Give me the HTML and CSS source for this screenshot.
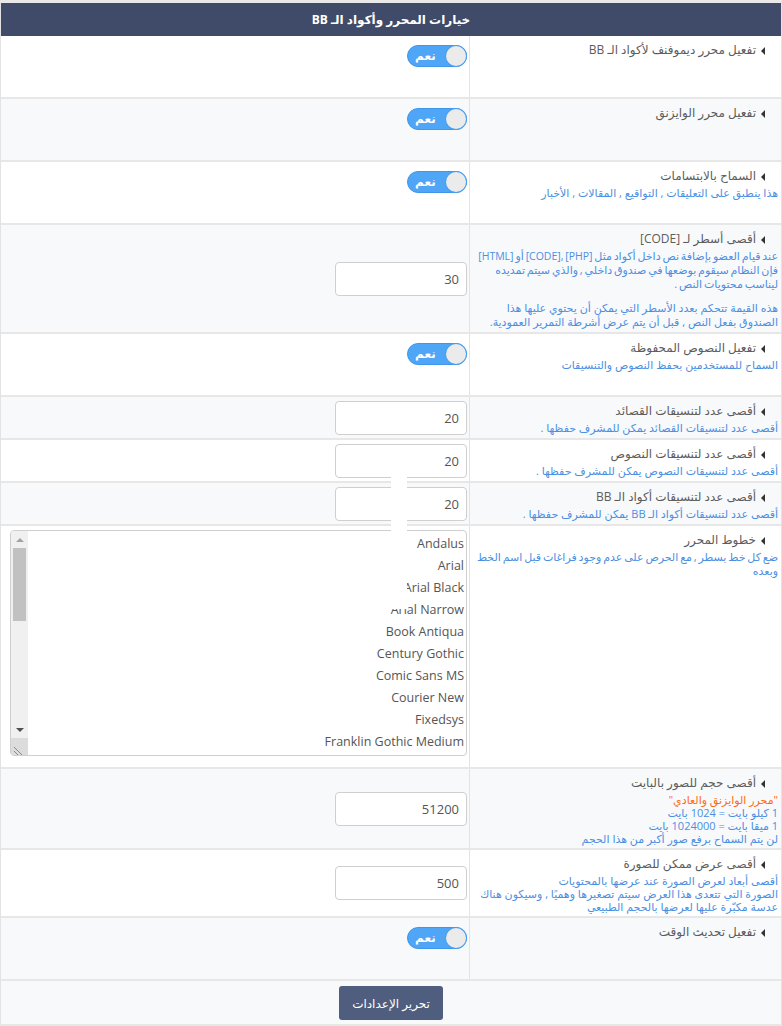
FILE: index.html
```
<html>
<head>
    <title>خيارات المحرر</title>
    <link rel="stylesheet" href="styles.css">
</head>
<body>
    <div class="panel" dir="rtl">
        <div class="panel-head">خيارات المحرر وأكواد الـ BB</div>

        <!-- Editor toggles -->
        <div class="row tall">
            <div class="label">
                <div class="title"><span class="arrow"></span>تفعيل محرر ديموفنف لأكواد الـ BB</div>
            </div>
            <div class="field top">
                <span class="switch"><span class="knob"></span><span class="switch-text">نعم</span></span>
            </div>
        </div>

        <div class="row tall alt">
            <div class="label">
                <div class="title"><span class="arrow"></span>تفعيل محرر الوايزنق</div>
            </div>
            <div class="field top">
                <span class="switch"><span class="knob"></span><span class="switch-text">نعم</span></span>
            </div>
        </div>

        <div class="row tall">
            <div class="label">
                <div class="title"><span class="arrow"></span>السماح بالابتسامات</div>
                <div class="desc">هذا ينطبق على التعليقات , التواقيع , المقالات , الأخبار</div>
            </div>
            <div class="field top">
                <span class="switch"><span class="knob"></span><span class="switch-text">نعم</span></span>
            </div>
        </div>

        <div class="row alt">
            <div class="label">
                <div class="title"><span class="arrow"></span>أقصى أسطر لـ [CODE]</div>
                <div class="desc lines squeeze">عند قيام العضو بإضافة نص داخل أكواد مثل <span class="latin">[PHP] ,[CODE]</span> أو <span class="latin">[HTML]</span><br>فإن النظام سيقوم بوضعها في صندوق داخلي , والذي سيتم تمديده<br>ليناسب محتويات النص .</div>
                <div class="desc lines gap">هذه القيمة تتحكم بعدد الأسطر التي يمكن أن يحتوي عليها هذا<br>الصندوق بفعل النص , قبل أن يتم عرض أشرطة التمرير العمودية.</div>
            </div>
            <div class="field">
                <input class="text-input" type="text" value="30">
            </div>
        </div>

        <div class="row tall">
            <div class="label">
                <div class="title"><span class="arrow"></span>تفعيل النصوص المحفوظة</div>
                <div class="desc">السماح للمستخدمين بحفظ النصوص والتنسيقات</div>
            </div>
            <div class="field top">
                <span class="switch"><span class="knob"></span><span class="switch-text">نعم</span></span>
            </div>
        </div>

        <!-- Saved formats -->
        <div class="row alt">
            <div class="label">
                <div class="title"><span class="arrow"></span>أقصى عدد لتنسيقات القصائد</div>
                <div class="desc">أقصى عدد لتنسيقات القصائد يمكن للمشرف حفظها .</div>
            </div>
            <div class="field">
                <input class="text-input" type="text" value="20">
            </div>
        </div>

        <div class="row">
            <div class="label">
                <div class="title"><span class="arrow"></span>أقصى عدد لتنسيقات النصوص</div>
                <div class="desc">أقصى عدد لتنسيقات النصوص يمكن للمشرف حفظها .</div>
            </div>
            <div class="field">
                <input class="text-input" type="text" value="20">
            </div>
        </div>

        <div class="row alt">
            <div class="label">
                <div class="title"><span class="arrow"></span>أقصى عدد لتنسيقات أكواد الـ BB</div>
                <div class="desc">أقصى عدد لتنسيقات أكواد الـ BB يمكن للمشرف حفظها .</div>
            </div>
            <div class="field">
                <input class="text-input" type="text" value="20">
            </div>
        </div>

        <!-- Fonts list -->
        <div class="row">
            <div class="label">
                <div class="title"><span class="arrow"></span>خطوط المحرر</div>
                <div class="desc squeeze">ضع كل خط بسطر , مع الحرص على عدم وجود فراغات قبل اسم الخط وبعده</div>
            </div>
            <div class="field fonts">
                <div class="fonts-wrap">
                    <textarea class="fonts-box">Andalus
Arial
Arial Black
Arial Narrow
Book Antiqua
Century Gothic
Comic Sans MS
Courier New
Fixedsys
Franklin Gothic Medium
Garamond
Georgia
Impact
Lucida Console
Lucida Sans Unicode
Microsoft Sans Serif
Palatino Linotype
Simplified Arabic
System
Tahoma
Terminal
Times New Roman
Traditional Arabic
Trebuchet MS
Verdana</textarea>
                    <div class="scrollbar">
                        <div class="sb-btn"><span class="sb-up"></span></div>
                        <div class="sb-thumb"></div>
                        <div class="sb-track"></div>
                        <div class="sb-btn"><span class="sb-down"></span></div>
                        <div class="sb-corner">
                            <svg width="17" height="17" viewBox="0 0 17 17">
                                <path d="M3 9 L11 17 M3 13 L7 17" stroke="#8a8a8a" stroke-width="1"/>
                            </svg>
                        </div>
                    </div>
                </div>
            </div>
        </div>

        <!-- Images -->
        <div class="row alt">
            <div class="label">
                <div class="title"><span class="arrow"></span>أقصى حجم للصور بالبايت</div>
                <div class="desc tight"><span class="note">"محرر الوايزنق والعادي"</span></div>
                <div class="desc tight">1 كيلو بايت = 1024 بايت</div>
                <div class="desc tight">1 ميقا بايت = 1024000 بايت</div>
                <div class="desc tight">لن يتم السماح برفع صور أكبر من هذا الحجم</div>
            </div>
            <div class="field">
                <input class="text-input" type="text" value="51200">
            </div>
        </div>

        <div class="row">
            <div class="label">
                <div class="title"><span class="arrow"></span>أقصى عرض ممكن للصورة</div>
                <div class="desc tight">أقصى أبعاد لعرض الصورة عند عرضها بالمحتويات</div>
                <div class="desc tight">الصورة التي تتعدى هذا العرض سيتم تصغيرها وهميًا , وسيكون هناك عدسة مكبّرة عليها لعرضها بالحجم الطبيعي</div>
            </div>
            <div class="field">
                <input class="text-input" type="text" value="500">
            </div>
        </div>

        <div class="row tall alt">
            <div class="label">
                <div class="title"><span class="arrow"></span>تفعيل تحديث الوقت</div>
            </div>
            <div class="field top">
                <span class="switch"><span class="knob"></span><span class="switch-text">نعم</span></span>
            </div>
        </div>

        <div class="panel-foot">
            <button type="submit" class="save-button">تحرير الإعدادات</button>
        </div>

        <div class="glitch"></div>
    </div>
</body>
</html>
```

FILE: styles.css
```
body {
    margin: 0;
    font-family: 'Open Sans', 'DejaVu Sans', sans-serif;
    background-color: #fff;
    color: #555;
}

.panel {
    position: relative;
    border-top: 3px solid #e9e9e9;
    border-left: 1px solid #e3e3e3;
    border-right: 1px solid #e3e3e3;
}

.panel-head {
    height: 33px;
    line-height: 33px;
    background-color: #3f4b69;
    color: #fff;
    font-size: 12px;
    font-weight: bold;
    text-align: center;
}

.row {
    display: grid;
    grid-template-columns: 312px 1fr;
    border-bottom: 2px solid #e7e7e7;
    background-color: #fff;
}

.row.alt {
    background-color: #f8f9fb;
}

.row.tall {
    min-height: 61px;
}

.label {
    border-left: 1px solid #e3e3e3;
    padding: 4px 3px 3px 4px;
}

.title {
    padding-right: 13px;
    font-size: 12px;
    line-height: 20px;
    color: #5c5c5c;
    white-space: nowrap;
}

.arrow {
    display: inline-block;
    width: 0;
    height: 0;
    margin-left: 5px;
    border-top: 4px solid transparent;
    border-bottom: 4px solid transparent;
    border-right: 4px solid #333;
    vertical-align: middle;
}

.desc {
    font-size: 11px;
    line-height: 14px;
    color: #4b8fe2;
}

.desc.lines {
    white-space: nowrap;
}

.desc.squeeze {
    word-spacing: -1px;
}

.latin {
    font-size: 10.5px;
}

.desc.tight {
    line-height: 13px;
}

.desc.gap {
    margin-top: 10px;
}

.note {
    color: #ff6a13;
}

.field {
    display: flex;
    align-items: center;
    padding: 0 2px;
}

.field.top {
    align-items: flex-start;
    padding-top: 9px;
}

.field.fonts {
    padding-top: 4px;
    padding-bottom: 11px;
}

.switch {
    position: relative;
    display: inline-block;
    width: 60px;
    height: 22px;
    border-radius: 11px;
    background-color: #4fa5f6;
    box-sizing: border-box;
    border: 1px solid #3f96ea;
}

.knob {
    position: absolute;
    top: 0;
    right: 0;
    width: 20px;
    height: 20px;
    border-radius: 50%;
    background-color: #ebebeb;
    box-shadow: 0 0 0 1px #4a9ff0;
}

.switch-text {
    position: absolute;
    left: 7px;
    top: 0;
    font-size: 12px;
    line-height: 19px;
    font-weight: bold;
    color: #fff;
}

.text-input {
    width: 132px;
    height: 34px;
    box-sizing: border-box;
    padding: 0 7px;
    border: 1px solid #cfcfcf;
    border-radius: 4px;
    background-color: #fff;
    font-family: 'Open Sans', 'DejaVu Sans', sans-serif;
    font-size: 13px;
    color: #555;
    text-align: right;
}

.fonts-wrap {
    position: relative;
    width: 457px;
    height: 226px;
}

.fonts-box {
    display: block;
    width: 457px;
    height: 226px;
    box-sizing: border-box;
    padding: 2px 2px 2px 20px;
    border: 1px solid #cfcfcf;
    border-radius: 4px;
    font-family: 'Open Sans', 'DejaVu Sans', sans-serif;
    font-size: 12.5px;
    line-height: 22px;
    color: #555;
    text-align: right;
    resize: none;
    overflow: hidden;
}

/* drawn scrollbar, the textarea one is hidden in the capture */
.scrollbar {
    position: absolute;
    left: 1px;
    top: 1px;
    bottom: 1px;
    width: 17px;
    display: flex;
    flex-direction: column;
    background-color: #f0f0f0;
    border-radius: 3px 0 0 3px;
}

.sb-btn {
    height: 17px;
    display: flex;
    align-items: center;
    justify-content: center;
}

.sb-up {
    width: 0;
    height: 0;
    border-left: 4px solid transparent;
    border-right: 4px solid transparent;
    border-bottom: 4px solid #a3a3a3;
}

.sb-down {
    width: 0;
    height: 0;
    border-left: 4px solid transparent;
    border-right: 4px solid transparent;
    border-top: 4px solid #505050;
}

.sb-thumb {
    height: 73px;
    margin: 0 2px;
    background-color: #c1c1c1;
}

.sb-track {
    flex: 1;
}

.sb-corner {
    height: 17px;
    background-color: #dcdcdc;
    border-radius: 0 0 0 3px;
}

.sb-corner svg {
    display: block;
}

.panel-foot {
    display: flex;
    justify-content: center;
    padding: 5px 0 4px;
    background-color: #f8f9fb;
    border-bottom: 2px solid #e7e7e7;
}

.save-button {
    width: 104px;
    height: 34px;
    border: none;
    border-radius: 3px;
    background-color: #4f5d7e;
    color: #fff;
    font-family: 'Open Sans', 'DejaVu Sans', sans-serif;
    font-size: 12px;
    cursor: pointer;
}

/* white strip left over the middle rows */
.glitch {
    position: absolute;
    left: 390px;
    top: 444px;
    width: 16px;
    height: 162px;
    background-color: #fff;
}
```
